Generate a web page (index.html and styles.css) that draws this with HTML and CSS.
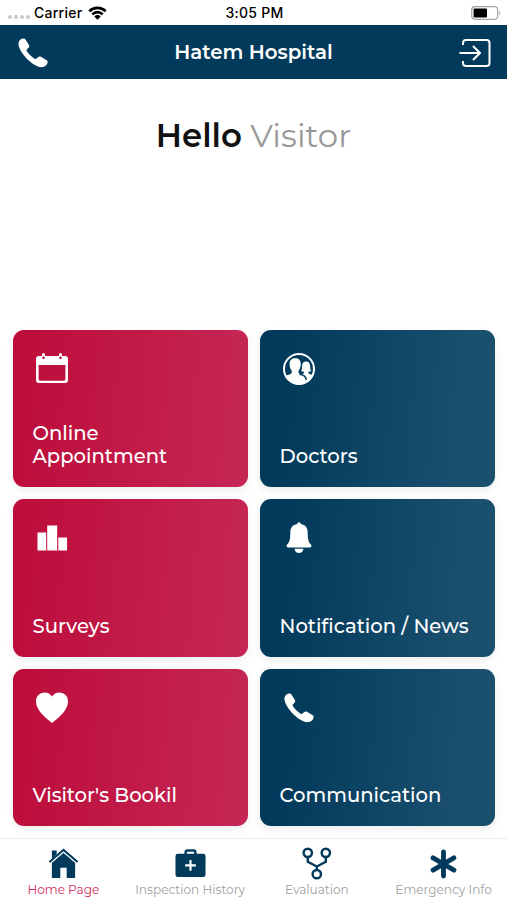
FILE: index.html
```html
<!DOCTYPE html>
<html lang="en">
<head>
    <meta charset="UTF-8">
    <meta name="viewport" content="width=device-width, initial-scale=1.0">
    <title>Hatem Hospital</title>
    <link rel="stylesheet" href="styles.css">
</head>
<body>
    <div class="status-bar">
        <div class="carrier">
            <span class="dots"><i></i><i></i><i></i><i></i></span>
            <span>Carrier</span>
            <svg class="wifi" viewBox="0 0 19 14">
                <path d="M1.3 5.2a11.7 11.7 0 0 1 16.4 0M4.3 8.3a7.4 7.4 0 0 1 10.4 0" fill="none" stroke="#000" stroke-width="2.6"/>
                <path d="M9.5 13.8l-3.2-3.3a4.4 4.4 0 0 1 6.4 0z"/>
            </svg>
        </div>
        <div class="time">3:05 PM</div>
        <svg class="battery" viewBox="0 0 30 14">
            <rect x=".7" y=".7" width="26" height="12.6" rx="3.5" fill="none" stroke="#a5a5a5" stroke-width="1.2"/>
            <rect x="2.6" y="2.5" width="13.4" height="9" rx="1.3"/>
            <path d="M28.2 5c1.5.6 1.5 3.4 0 4z" fill="#a5a5a5"/>
        </svg>
    </div>

    <header class="header">
        <svg class="phone" viewBox="0 0 30 30">
            <path d="M1 3.600C1.800 1.800 3.600.5 5.600.5c1 0 1.500.4 2 1.200l3.200 5c.7 1.100.6 2-.3 3L8.800 11.600c-.4.500-.4.900 0 1.500 1.900 2.900 4.700 5.700 7.800 7.700.7.400 1.100.3 1.600-.1l2-1.700c.9-.7 1.800-.8 2.800-.2l5.300 3.300c1.200.8 1.600 1.600 1.200 2.800-.7 2-2.600 3.700-4.700 4.100-2.800.5-5.600-.5-8.800-2.500C9.700 22.500 4 16.300 1.200 9.500.3 7.200.1 5.400 1 3.600z" fill="#fff"/>
        </svg>
        <h1>Hatem Hospital</h1>
        <svg class="login" viewBox="0 0 32 28">
            <path d="M4 6V4a3 3 0 0 1 3-3h20.500a3 3 0 0 1 3 3v20a3 3 0 0 1-3 3H7a3 3 0 0 1-3-3v-2M.5 14h20M14 7l7 7-7 7" fill="none" stroke="#fff" stroke-width="2"/>
        </svg>
    </header>

    <h2 class="greeting"><b>Hello</b> <span>Visitor</span></h2>

    <main class="cards">
        <a class="card red">
            <svg viewBox="0 0 32 32">
                <path fill-rule="evenodd" d="M3 3h3V1.500a1.500 1.500 0 0 1 3 0V3h14V1.500a1.500 1.500 0 0 1 3 0V3h3a3 3 0 0 1 3 3v21a3 3 0 0 1-3 3H3a3 3 0 0 1-3-3V6a3 3 0 0 1 3-3zM2.600 12v14.300a1.400 1.400 0 0 0 1.400 1.400h24a1.400 1.400 0 0 0 1.400-1.400V12z"/>
                <circle class="hole" cx="7.500" cy="4.800" r="1.300"/>
                <circle class="hole" cx="24.500" cy="4.800" r="1.300"/>
            </svg>
            <span>Online<br>Appointment</span>
        </a>
        <a class="card blue">
            <svg viewBox="0 0 32 32">
                <circle cx="16" cy="16" r="15" fill="none" stroke="#fff" stroke-width="2"/>
                <path d="M2 22.500c2.500-.4 5-1 6.200-2 .9-.8.900-2 .2-3.200C7.200 15.500 6.600 13.500 6.600 11c0-3.700 2.200-5.700 5.600-5.700s5.600 2 5.600 5.700c0 2.500-.7 4.500-1.900 6.300-.6 1.200-.6 2.400.2 3.200 1 .7 2.800.6 4.200.4l.6-1.300v-.8c-1.100 0-2-.3-2.900-.8 1.300-1.500 1-3.500 1.100-5.200.2-2.800 1.500-4.300 4-4.300s3.800 1.500 4 4.300c.1 1.700-.1 3.700 1.200 5.200-.9.500-1.800.8-2.900.8v1.400c1 .9 2.600 1.300 4.800 1.700A15.200 15.200 0 0 1 16 31.500 15.200 15.200 0 0 1 2 22.500z"/>
                <path class="line" d="M16.500 21.600c4 0 6.300 1.800 6.900 5.400"/>
            </svg>
            <span>Doctors</span>
        </a>
        <a class="card red">
            <svg viewBox="0 0 32 32">
                <path d="M1.500 10.500h8.700V28.500H1.500zM11.200 3.500h10V28.500h-10zM22.300 15.500h8.700v13h-8.700z"/>
            </svg>
            <span>Surveys</span>
        </a>
        <a class="card blue">
            <svg viewBox="0 0 32 32">
                <path d="M14.200 2a1.800 1.800 0 0 1 3.600 0c4.600.9 6.900 3.900 6.900 8.300 0 7.200.8 10.200 3.300 12.500.9.800.5 2.600-.9 2.600H4.900c-1.400 0-1.800-1.800-.9-2.600 2.500-2.300 3.300-5.300 3.300-12.500C7.300 5.900 9.600 2.900 14.200 2zM11.600 26.700h8.800c-.2 2.800-2 4.300-4.400 4.300s-4.200-1.500-4.400-4.300z"/>
            </svg>
            <span>Notification / News</span>
        </a>
        <a class="card red">
            <svg viewBox="0 0 32 32">
                <path d="M16 31C8 24.800 0 17.500 0 9.500 0 4 3.800.5 8.500.5c3.300 0 6 1.600 7.500 4.100C17.500 2.100 20.200.5 23.500.5 28.200.5 32 4 32 9.500 32 17.500 24 24.800 16 31z"/>
            </svg>
            <span>Visitor's Bookil</span>
        </a>
        <a class="card blue">
            <svg viewBox="-1 -1 32 32">
                <path d="M1 3.600C1.800 1.800 3.600.5 5.600.5c1 0 1.500.4 2 1.200l3.200 5c.7 1.100.6 2-.3 3L8.800 11.600c-.4.500-.4.900 0 1.500 1.900 2.900 4.700 5.700 7.800 7.700.7.400 1.100.3 1.600-.1l2-1.700c.9-.7 1.800-.8 2.800-.2l5.300 3.300c1.200.8 1.600 1.600 1.200 2.800-.7 2-2.600 3.700-4.700 4.100-2.800.5-5.600-.5-8.800-2.500C9.700 22.500 4 16.300 1.200 9.500.3 7.200.1 5.400 1 3.600z"/>
            </svg>
            <span>Communication</span>
        </a>
    </main>

    <nav class="tabs">
        <a class="tab active">
            <svg viewBox="0 0 32 32">
                <path d="M4 2.500h5v4L4 11zM16 4.800l12 10.400V31h-8.700V20.500h-6.600V31H4V15.200z"/>
                <path d="M1.500 14.500L16 2l14.500 12.500" fill="none" stroke="#023a5b" stroke-width="2.200"/>
                <path d="M3 15.500L16 4.400l13 11.100" fill="none" stroke="#fff" stroke-width=".9"/>
            </svg>
            <span>Home Page</span>
        </a>
        <a class="tab">
            <svg viewBox="0 0 32 32">
                <path d="M11 7V4.200a1.700 1.700 0 0 1 1.700-1.700h6.600A1.700 1.700 0 0 1 21 4.200V7" fill="none" stroke="#023a5b" stroke-width="2.600"/>
                <rect x=".5" y="6" width="31" height="24" rx="2.500"/>
                <path d="M16 12.500v11M10.500 18h11" stroke="#fff" stroke-width="2.200"/>
            </svg>
            <span>Inspection History</span>
        </a>
        <a class="tab">
            <svg viewBox="0 0 32 32">
                <g fill="none" stroke="#023a5b" stroke-width="2.500">
                    <circle cx="7" cy="5" r="4.300"/>
                    <circle cx="25.600" cy="5" r="4.300"/>
                    <circle cx="16.300" cy="27" r="4.300"/>
                    <path d="M7 9.300v5l9.300 4.800 9.300-4.800v-5M16.300 18.500v4.200"/>
                </g>
            </svg>
            <span>Evaluation</span>
        </a>
        <a class="tab">
            <svg viewBox="0 0 32 32">
                <path d="M16 4v25M5.200 10.200l21.600 12.600M26.800 10.200L5.200 22.800" stroke="#023a5b" stroke-width="5" stroke-linecap="round"/>
            </svg>
            <span>Emergency Info</span>
        </a>
    </nav>
</body>
</html>
```
FILE: styles.css
```css
* {
    box-sizing: border-box;
}
body {
    margin: 0;
    width: 507px;
    height: 900px;
    overflow: hidden;
    display: flex;
    flex-direction: column;
    background: #fff;
    font-family: Montserrat, Inter, sans-serif;
}
svg {
    display: block;
    flex: none;
    overflow: visible;
}
.status-bar {
    height: 25px;
    display: grid;
    grid-template-columns: 1fr auto 1fr;
    align-items: center;
    padding: 1px 6px 0 8px;
    font: 500 14px/24px Inter, sans-serif;
    letter-spacing: 0.25px;
}
.carrier {
    display: flex;
    align-items: center;
}
.dots {
    display: flex;
    gap: 2px;
    padding-top: 8px;
    margin-right: 4px;
}
.dots i {
    width: 4px;
    height: 4px;
    border-radius: 50%;
    background: #c8c8c8;
}
.wifi {
    width: 19px;
    height: 14px;
    margin-left: 6px;
}
.battery {
    width: 30px;
    height: 14px;
    justify-self: end;
}
.header {
    height: 54px;
    display: flex;
    align-items: center;
    justify-content: space-between;
    padding: 0 16px 0 18px;
    background: #023a5b;
    color: #fff;
}
.header h1 {
    margin: 0;
    font-size: 19.8px;
    font-weight: 600;
}
.phone {
    width: 30px;
    height: 30px;
    margin-top: 1px;
}
.login {
    width: 32px;
    height: 28px;
    margin-top: 1px;
}
.greeting {
    margin: 35px 0 0;
    height: 215.5px;
    text-align: center;
    font-size: 32.4px;
    line-height: 44px;
    font-weight: 400;
    color: #999;
    white-space: nowrap;
}
.greeting b {
    font-weight: 600;
    color: #111;
}
.cards {
    display: grid;
    grid-template-columns: 235px 235px;
    grid-auto-rows: 157.5px;
    gap: 12px;
    padding: 0 13px;
    height: 508.5px;
}
.card {
    display: flex;
    flex-direction: column;
    justify-content: space-between;
    align-items: flex-start;
    padding: 23px 0 19px 19.5px;
    border-radius: 11px;
    color: #fff;
    font-size: 19.6px;
    font-weight: 500;
    line-height: 23px;
    white-space: nowrap;
    box-shadow: 0 3px 8px rgba(0, 0, 0, 0.08);
}
.card svg {
    width: 32px;
    height: 32px;
    margin-left: 3.5px;
    fill: #fff;
}
.red {
    background: linear-gradient(95deg, #bd0d3b 5%, #c52654 95%);
}
.blue {
    background: linear-gradient(95deg, #023a5b 12%, #1a4f6e 85%);
}
.card .hole {
    fill: #be123f;
}
.card .line {
    fill: none;
    stroke: #063d5e;
    stroke-width: 1.5;
}
.tabs {
    flex: 1;
    display: grid;
    grid-template-columns: repeat(4, 1fr);
    border-top: 1px solid #ececec;
    background: #fff;
    position: relative;
}
.tab {
    display: flex;
    flex-direction: column;
    align-items: center;
    padding-top: 8.5px;
    font-size: 12.1px;
    line-height: 16px;
    color: #a0a0a0;
    white-space: nowrap;
}
.tab svg {
    width: 31px;
    height: 31px;
    margin-bottom: 3px;
    fill: #023a5b;
}
.active {
    color: #d12c5b;
}
```
